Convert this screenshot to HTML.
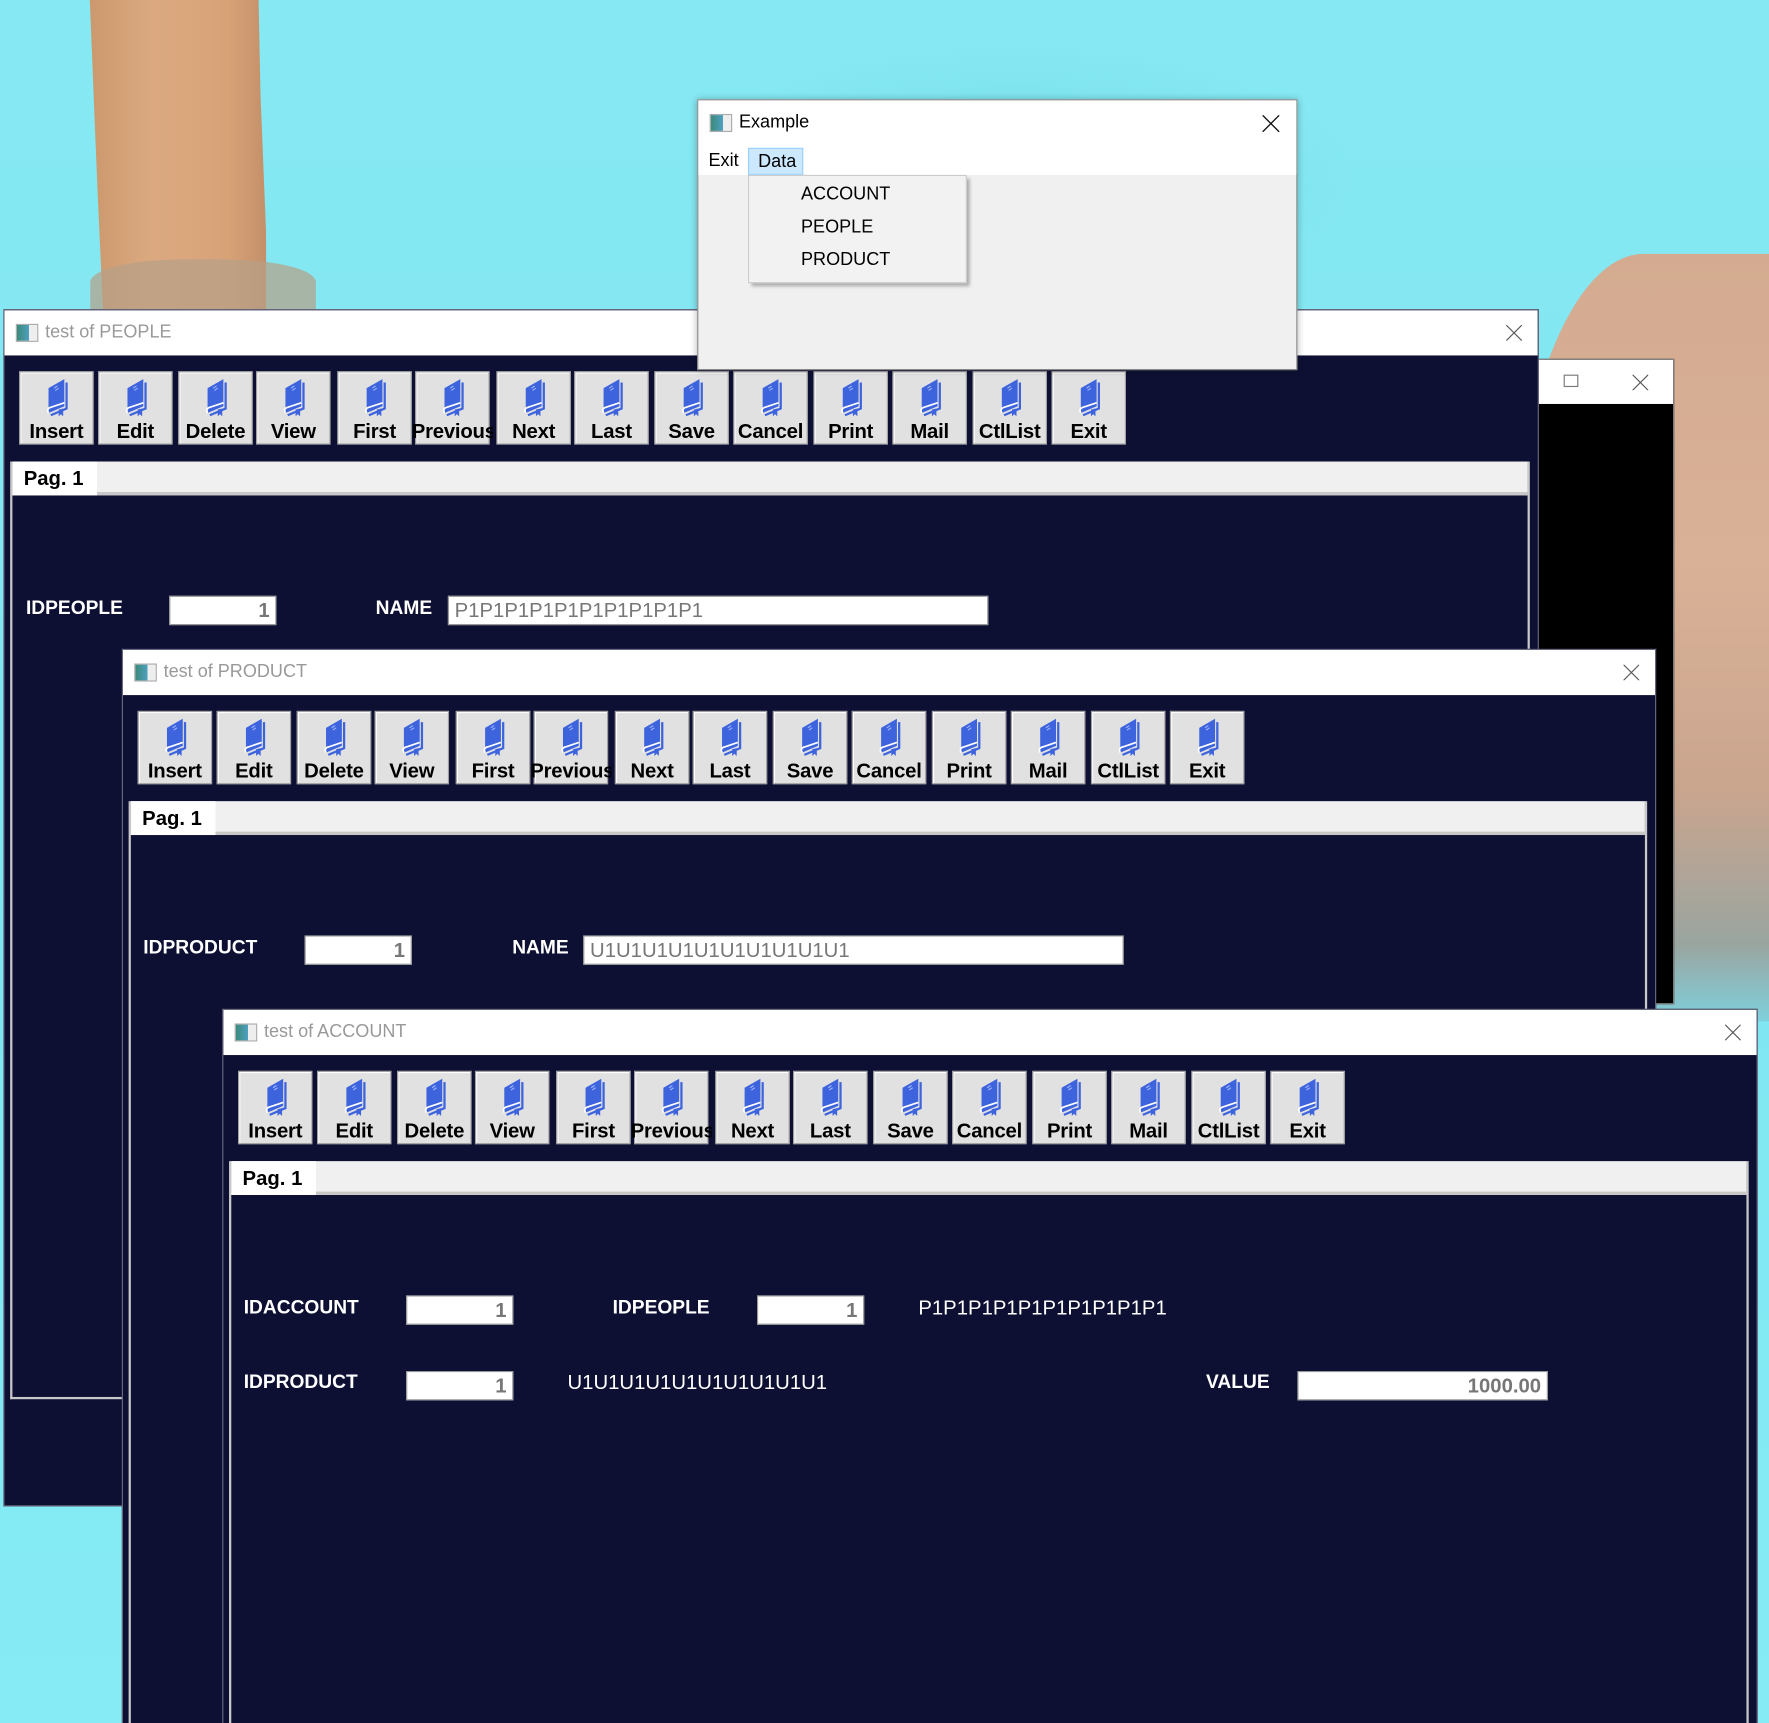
<!DOCTYPE html>
<html><head><meta charset="utf-8">
<style>
*{box-sizing:border-box;margin:0;padding:0}
html,body{width:1769px;height:1723px;overflow:hidden;background:#7ee6f0}
#s{position:absolute;left:0;top:0;width:1568px;height:1527px;transform:scale(1.12819,1.1284);transform-origin:0 0;overflow:hidden;
background:radial-gradient(ellipse 300px 120px at 900px 160px,rgba(90,200,215,.35),transparent),linear-gradient(180deg,#86e8f2 0%,#7fe6f1 50%,#86ebf5 100%);font-family:"Liberation Sans",sans-serif}
.arm{position:absolute;left:66px;top:0;width:170px;height:280px;background:linear-gradient(90deg,#c89468,#dba980 40%,#d8a277 80%,#c4906a);clip-path:polygon(8% 0,96% 0,97% 30%,100% 75%,100% 100%,15% 100%,12% 60%);}
.arm2{position:absolute;left:80px;top:230px;width:200px;height:50px;background:#b7a088;opacity:.7;border-radius:40% 40% 0 0}
.skin{position:absolute;left:1340px;top:225px;width:260px;height:680px;background:linear-gradient(180deg,#d4ab90,#d9b197 40%,#caa58e 70%,#9aa5a0 90%,#7fd0dc);border-radius:45% 0 0 30%}
.win{position:absolute;background:#0e1033;border:1px solid #6a6a80;overflow:hidden}
.tb{position:absolute;left:0;top:0;right:0;height:40px;background:#fff;font-size:16px;color:#999}
.tb .ic{position:absolute;left:10px;top:12px;width:20px;height:16px;border:1px solid #aaa;background:linear-gradient(90deg,#3a8a7a 0,#4fa0c0 60%,#eee 60%)}
.tb .t{position:absolute;left:36px;top:11px}
.tb svg.x{position:absolute;right:14px;top:13px}
.btn{position:absolute;top:54px;width:66px;height:65px;background:#e1e1e1;border:1px solid #a0a0a0;box-shadow:inset 1px 1px 0 #fff}
.btn svg{position:absolute;left:20px;top:5px}
.btn span{position:absolute;left:-4px;right:-4px;bottom:0;text-align:center;font-weight:bold;font-size:18px;color:#000;white-space:nowrap;overflow:hidden;letter-spacing:-.2px}
.tab{position:absolute;left:5px;top:134px;right:7px;bottom:0;border-left:2px solid #c8c8c8;border-right:2px solid #c8c8c8}
.tabh{position:absolute;left:0;right:0;top:0;height:30px;background:#f0f0f0;border-bottom:3px solid #c8c8c8}
.tabh b{position:absolute;left:0;top:0;width:75px;height:30px;background:#fff;font-size:18px;padding:5px 0 0 10px}
.lab{position:absolute;color:#fff;font-weight:bold;font-size:17px}
.inp{position:absolute;height:26px;background:#fff;border:1px solid #999;color:#777;font-size:18px;padding:2px 5px;font-weight:bold}
.r{text-align:right}
</style></head><body><div id="s">
<div class="arm"></div><div class="arm2"></div>
<div class="skin"></div>

<div class="win" style="left:1340px;top:318px;width:144px;height:572px;background:#000;border-color:#888">
<div class="tb" style="height:39px"><div style="position:absolute;left:45px;top:13px;width:13px;height:11px;border:1px solid #777"></div><svg class="x" width="14" height="14" style="right:22px"><path d="M0 0L14 14M14 0L0 14" stroke="#555" stroke-width="1"/></svg></div></div>

<div class="win" style="left:3px;top:274px;width:1361px;height:1061px">
<div class="tb"><div class="ic"></div><div class="t">test of PEOPLE</div><svg class="x" width="14" height="14"><path d="M0 0L14 14M14 0L0 14" stroke="#555" stroke-width="1"/></svg></div>
<div id="tbP"></div>
<div class="tab" style="bottom:94px;border-bottom:2px solid #c8c8c8"><div class="tabh"><b>Pag. 1</b></div></div>
<div class="lab" style="left:19px;top:254px">IDPEOPLE</div>
<div class="inp r" style="left:146px;top:253px;width:95px">1</div>
<div class="lab" style="left:329px;top:254px">NAME</div>
<div class="inp" style="left:393px;top:253px;width:479px;font-weight:normal">P1P1P1P1P1P1P1P1P1P1</div>
</div>

<div class="win" style="left:108px;top:575px;width:1360px;height:952px;border-bottom:none">
<div class="tb"><div class="ic"></div><div class="t">test of PRODUCT</div><svg class="x" width="14" height="14"><path d="M0 0L14 14M14 0L0 14" stroke="#555" stroke-width="1"/></svg></div>
<div id="tbR"></div>
<div class="tab"><div class="tabh"><b>Pag. 1</b></div></div>
<div class="lab" style="left:18px;top:254px">IDPRODUCT</div>
<div class="inp r" style="left:161px;top:253px;width:95px">1</div>
<div class="lab" style="left:345px;top:254px">NAME</div>
<div class="inp" style="left:408px;top:253px;width:479px;font-weight:normal">U1U1U1U1U1U1U1U1U1U1</div>
</div>

<div class="win" style="left:197px;top:894px;width:1361px;height:633px;border-bottom:none">
<div class="tb"><div class="ic"></div><div class="t">test of ACCOUNT</div><svg class="x" width="14" height="14"><path d="M0 0L14 14M14 0L0 14" stroke="#555" stroke-width="1"/></svg></div>
<div id="tbA"></div>
<div class="tab"><div class="tabh"><b>Pag. 1</b></div></div>
<div class="lab" style="left:18px;top:254px">IDACCOUNT</div>
<div class="inp r" style="left:162px;top:253px;width:95px">1</div>
<div class="lab" style="left:345px;top:254px">IDPEOPLE</div>
<div class="inp r" style="left:473px;top:253px;width:95px">1</div>
<div class="lab" style="left:616px;top:254px;font-weight:normal;font-size:18px">P1P1P1P1P1P1P1P1P1P1</div>
<div class="lab" style="left:18px;top:320px">IDPRODUCT</div>
<div class="inp r" style="left:162px;top:320px;width:95px">1</div>
<div class="lab" style="left:305px;top:320px;font-weight:normal;font-size:18px">U1U1U1U1U1U1U1U1U1U1</div>
<div class="lab" style="left:871px;top:320px">VALUE</div>
<div class="inp r" style="left:952px;top:320px;width:222px">1000.00</div>
</div>

<div style="position:absolute;left:618px;top:88px;width:532px;height:240px;background:#f0f0f0;border:1px solid #888;box-shadow:0 0 6px rgba(0,0,0,.3)">
<div style="position:absolute;left:0;top:0;right:0;height:66px;background:#fff"></div>
<div style="position:absolute;left:10px;top:12px;width:20px;height:16px;border:1px solid #aaa;background:linear-gradient(90deg,#3a8a7a 0,#4fa0c0 60%,#eee 60%)"></div>
<div style="position:absolute;left:36px;top:11px;font-size:16px;color:#000">Example</div>
<svg style="position:absolute;right:15px;top:13px" width="15" height="15"><path d="M0 0L15 15M15 0L0 15" stroke="#111" stroke-width="1.2"/></svg>
<div style="position:absolute;left:9px;top:45px;font-size:16px">Exit</div>
<div style="position:absolute;left:44px;top:42px;width:49px;height:24px;background:#cce8ff;border:1px solid #99d1ff;font-size:16px;padding:3px 0 0 8px">Data</div>
<div style="position:absolute;left:44px;top:66px;width:194px;height:96px;background:#f2f2f2;border:1px solid #ccc;box-shadow:3px 3px 3px rgba(0,0,0,.3);font-size:16px;color:#000">
<div style="position:absolute;left:46px;top:8px">ACCOUNT</div>
<div style="position:absolute;left:46px;top:37px">PEOPLE</div>
<div style="position:absolute;left:46px;top:66px">PRODUCT</div>
</div>
</div>

</div>
<script>
var names=["Insert","Edit","Delete","View","First","Previous","Next","Last","Save","Cancel","Print","Mail","CtlList","Exit"];
var offs=[0,70,141,210,282,351,423,492,563,633,704,774,845,915];
var icon='<svg width="26" height="34" viewBox="0 0 26 34"><path d="M5 9 L19 1 L19 25 L5 31 Z" fill="#3d63dd"/><path d="M21 4 L21 27 L7 33" fill="none" stroke="#3d63dd" stroke-width="2"/><path d="M5 31 Q3 27 7 26 L19 22" fill="none" stroke="#fff" stroke-width="1.5"/><path d="M14 28 L14 34 L16 32 L18 34 L18 27Z" fill="#3d63dd"/><path d="M10 9 L13 7 M11 11 L14 9" stroke="#9fb6ff" stroke-width="1"/></svg>';
[["tbP",13],["tbR",13],["tbA",13]].forEach(function(a){var h="";for(var i=0;i<14;i++)h+='<div class="btn" style="left:'+(a[1]+offs[i])+'px">'+icon+'<span>'+names[i]+'</span></div>';document.getElementById(a[0]).outerHTML=h;});
</script>
</body></html>
